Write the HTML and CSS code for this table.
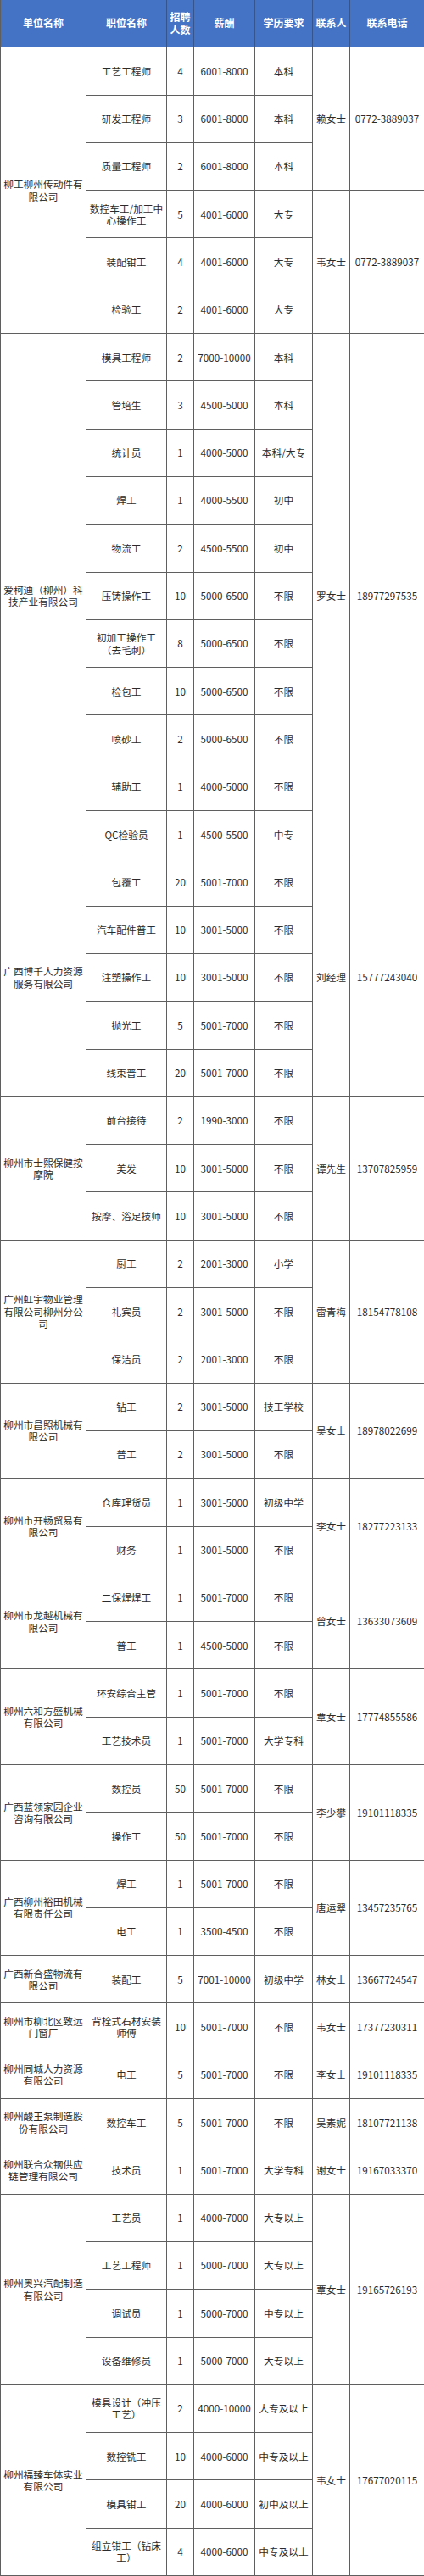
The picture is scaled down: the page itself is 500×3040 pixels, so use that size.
FILE: index.html
```html
<!DOCTYPE html>
<html lang="zh-CN">
<head>
<meta charset="utf-8">
<title>招聘信息</title>
<link rel="stylesheet" href="styles.css">
</head>
<body>
<table class="jobs">
<colgroup>
<col class="c-co"><col class="c-pos"><col class="c-num"><col class="c-pay"><col class="c-edu"><col class="c-who"><col class="c-tel">
</colgroup>
<thead>
<tr class="head"><th>单位名称</th><th>职位名称</th><th>招聘人数</th><th>薪酬</th><th>学历要求</th><th>联系人</th><th>联系电话</th></tr>
</thead>
<tbody>
<tr><td rowspan="6">柳工柳州传动件有限公司</td><td>工艺工程师</td><td>4</td><td>6001-8000</td><td>本科</td><td rowspan="3">赖女士</td><td rowspan="3">0772-3889037</td></tr>
<tr><td>研发工程师</td><td>3</td><td>6001-8000</td><td>本科</td></tr>
<tr><td>质量工程师</td><td>2</td><td>6001-8000</td><td>本科</td></tr>
<tr><td>数控车工/加工中心操作工</td><td>5</td><td>4001-6000</td><td>大专</td><td rowspan="3">韦女士</td><td rowspan="3">0772-3889037</td></tr>
<tr><td>装配钳工</td><td>4</td><td>4001-6000</td><td>大专</td></tr>
<tr><td>检验工</td><td>2</td><td>4001-6000</td><td>大专</td></tr>

<tr><td rowspan="11">爱柯迪（柳州）科技产业有限公司</td><td>模具工程师</td><td>2</td><td>7000-10000</td><td>本科</td><td rowspan="11">罗女士</td><td rowspan="11">18977297535</td></tr>
<tr><td>管培生</td><td>3</td><td>4500-5000</td><td>本科</td></tr>
<tr><td>统计员</td><td>1</td><td>4000-5000</td><td>本科/大专</td></tr>
<tr><td>焊工</td><td>1</td><td>4000-5500</td><td>初中</td></tr>
<tr><td>物流工</td><td>2</td><td>4500-5500</td><td>初中</td></tr>
<tr><td>压铸操作工</td><td>10</td><td>5000-6500</td><td>不限</td></tr>
<tr><td>初加工操作工（去毛刺）</td><td>8</td><td>5000-6500</td><td>不限</td></tr>
<tr><td>检包工</td><td>10</td><td>5000-6500</td><td>不限</td></tr>
<tr><td>喷砂工</td><td>2</td><td>5000-6500</td><td>不限</td></tr>
<tr><td>辅助工</td><td>1</td><td>4000-5000</td><td>不限</td></tr>
<tr><td>QC检验员</td><td>1</td><td>4500-5500</td><td>中专</td></tr>

<tr><td rowspan="5">广西博千人力资源服务有限公司</td><td>包覆工</td><td>20</td><td>5001-7000</td><td>不限</td><td rowspan="5">刘经理</td><td rowspan="5">15777243040</td></tr>
<tr><td>汽车配件普工</td><td>10</td><td>3001-5000</td><td>不限</td></tr>
<tr><td>注塑操作工</td><td>10</td><td>3001-5000</td><td>不限</td></tr>
<tr><td>抛光工</td><td>5</td><td>5001-7000</td><td>不限</td></tr>
<tr><td>线束普工</td><td>20</td><td>5001-7000</td><td>不限</td></tr>

<tr><td rowspan="3">柳州市士熙保健按摩院</td><td>前台接待</td><td>2</td><td>1990-3000</td><td>不限</td><td rowspan="3">谭先生</td><td rowspan="3">13707825959</td></tr>
<tr><td>美发</td><td>10</td><td>3001-5000</td><td>不限</td></tr>
<tr><td>按摩、浴足技师</td><td>10</td><td>3001-5000</td><td>不限</td></tr>

<tr><td rowspan="3">广州虹宇物业管理有限公司柳州分公司</td><td>厨工</td><td>2</td><td>2001-3000</td><td>小学</td><td rowspan="3">雷青梅</td><td rowspan="3">18154778108</td></tr>
<tr><td>礼宾员</td><td>2</td><td>3001-5000</td><td>不限</td></tr>
<tr><td>保洁员</td><td>2</td><td>2001-3000</td><td>不限</td></tr>

<tr><td rowspan="2">柳州市昌照机械有限公司</td><td>钻工</td><td>2</td><td>3001-5000</td><td>技工学校</td><td rowspan="2">吴女士</td><td rowspan="2">18978022699</td></tr>
<tr><td>普工</td><td>2</td><td>3001-5000</td><td>不限</td></tr>

<tr><td rowspan="2">柳州市开畅贸易有限公司</td><td>仓库理货员</td><td>1</td><td>3001-5000</td><td>初级中学</td><td rowspan="2">李女士</td><td rowspan="2">18277223133</td></tr>
<tr><td>财务</td><td>1</td><td>3001-5000</td><td>不限</td></tr>

<tr><td rowspan="2">柳州市龙越机械有限公司</td><td>二保焊焊工</td><td>1</td><td>5001-7000</td><td>不限</td><td rowspan="2">曾女士</td><td rowspan="2">13633073609</td></tr>
<tr><td>普工</td><td>1</td><td>4500-5000</td><td>不限</td></tr>

<tr><td rowspan="2">柳州六和方盛机械有限公司</td><td>环安综合主管</td><td>1</td><td>5001-7000</td><td>不限</td><td rowspan="2">覃女士</td><td rowspan="2">17774855586</td></tr>
<tr><td>工艺技术员</td><td>1</td><td>5001-7000</td><td>大学专科</td></tr>

<tr><td rowspan="2">广西蓝领家园企业咨询有限公司</td><td>数控员</td><td>50</td><td>5001-7000</td><td>不限</td><td rowspan="2">李少攀</td><td rowspan="2">19101118335</td></tr>
<tr><td>操作工</td><td>50</td><td>5001-7000</td><td>不限</td></tr>

<tr><td rowspan="2">广西柳州裕田机械有限责任公司</td><td>焊工</td><td>1</td><td>5001-7000</td><td>不限</td><td rowspan="2">唐运翠</td><td rowspan="2">13457235765</td></tr>
<tr><td>电工</td><td>1</td><td>3500-4500</td><td>不限</td></tr>

<tr><td>广西新合盛物流有限公司</td><td>装配工</td><td>5</td><td>7001-10000</td><td>初级中学</td><td>林女士</td><td>13667724547</td></tr>
<tr><td>柳州市柳北区致远门窗厂</td><td>背栓式石材安装师傅</td><td>10</td><td>5001-7000</td><td>不限</td><td>韦女士</td><td>17377230311</td></tr>
<tr><td>柳州同城人力资源有限公司</td><td>电工</td><td>5</td><td>5001-7000</td><td>不限</td><td>李女士</td><td>19101118335</td></tr>
<tr><td>柳州酸王泵制造股份有限公司</td><td>数控车工</td><td>5</td><td>5001-7000</td><td>不限</td><td>吴素妮</td><td>18107721138</td></tr>
<tr><td>柳州联合众钢供应链管理有限公司</td><td>技术员</td><td>1</td><td>5001-7000</td><td>大学专科</td><td>谢女士</td><td>19167033370</td></tr>

<tr><td rowspan="4">柳州奥兴汽配制造有限公司</td><td>工艺员</td><td>1</td><td>4000-7000</td><td>大专以上</td><td rowspan="4">覃女士</td><td rowspan="4">19165726193</td></tr>
<tr><td>工艺工程师</td><td>1</td><td>5000-7000</td><td>大专以上</td></tr>
<tr><td>调试员</td><td>1</td><td>5000-7000</td><td>中专以上</td></tr>
<tr><td>设备维修员</td><td>1</td><td>5000-7000</td><td>大专以上</td></tr>

<tr><td rowspan="4">柳州福臻车体实业有限公司</td><td>模具设计（冲压工艺）</td><td>2</td><td>4000-10000</td><td>大专及以上</td><td rowspan="4">韦女士</td><td rowspan="4">17677020115</td></tr>
<tr><td>数控铣工</td><td>10</td><td>4000-6000</td><td>中专及以上</td></tr>
<tr><td>模具钳工</td><td>20</td><td>4000-6000</td><td>初中及以上</td></tr>
<tr><td>组立钳工（钻床工）</td><td>4</td><td>4000-6000</td><td>中专及以上</td></tr>
</tbody>
</table>
</body>
</html>
```

FILE: styles.css
```css
html, body {
  margin: 0;
  padding: 0;
  background: #ffffff;
}

.jobs {
  width: 500px;
  table-layout: fixed;
  border-collapse: separate;
  border-spacing: 0;
  border-left: 1px solid #5f5f5f;
  font-family: "Noto Sans CJK SC", "Noto Sans", sans-serif;
  font-size: 11.7px;
  line-height: 1.22;
  color: #2b2b2b;
}

.c-co { width: 101px; }
.c-pos { width: 95px; }
.c-num { width: 32px; }
.c-pay { width: 72px; }
.c-edu { width: 68px; }
.c-who { width: 44px; }
.c-tel { width: 88px; }

.jobs tr {
  height: 56.3px;
}

.jobs th,
.jobs td {
  text-align: center;
  vertical-align: middle;
  padding: 0 2px;
  border-right: 1px solid #5f5f5f;
  border-bottom: 1px solid #5f5f5f;
  overflow: hidden;
}

.head th {
  background: #4472c4;
  color: #ffffff;
  font-weight: 700;
  font-size: 12px;
  line-height: 1.2;
  border-right-color: #35558f;
  border-bottom-color: #3a5a94;
}
```
